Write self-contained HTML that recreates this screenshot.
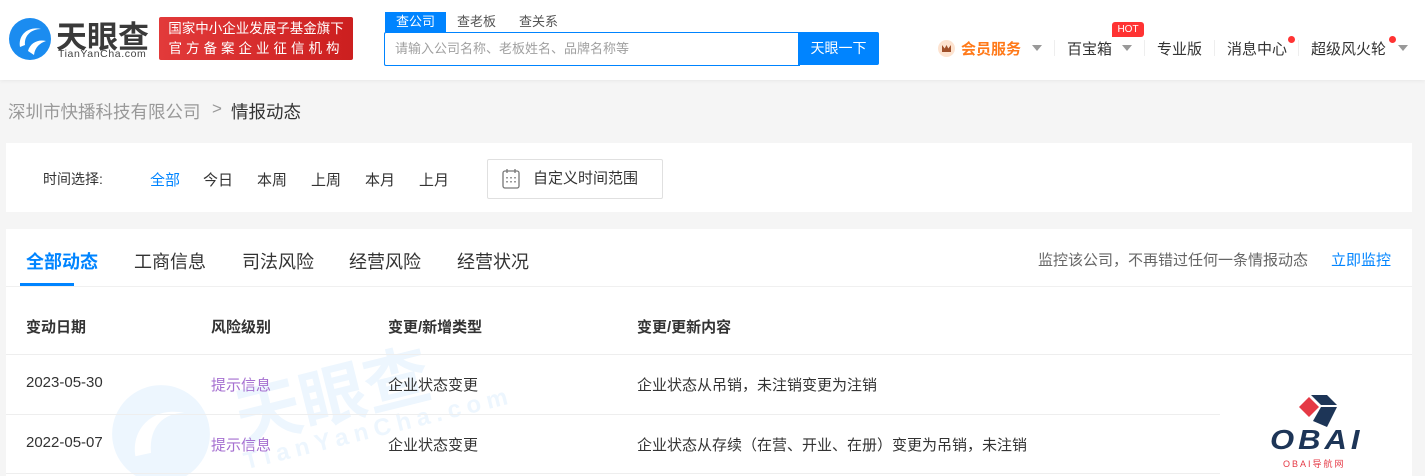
<!DOCTYPE html>
<html><head><meta charset="utf-8"><style>
*{margin:0;padding:0;box-sizing:border-box}
body{width:1425px;height:476px;overflow:hidden;background:#f5f5f5;font-family:"Liberation Sans","Noto Sans CJK SC",sans-serif;color:#333;position:relative}
.hdr{position:absolute;left:0;top:0;width:1425px;height:80px;background:#fff;box-shadow:0 1px 4px rgba(0,0,0,.06)}
.abs{position:absolute;white-space:nowrap}
.card{position:absolute;left:6px;width:1406px;background:#fff}
</style></head><body>
<div class="hdr">
  <svg class="abs" style="left:8px;top:17px" width="44" height="44" viewBox="0 0 44 44">
    <circle cx="22" cy="22" r="21" fill="#1b8cf0"/>
    <path d="M12 30 C10 18 20 9 33 12 C24 12 16 18 17 28 Z" fill="#fff"/>
    <path d="M20 34 C22 26 30 22 38 24 C32 26 27 30 26 38 Z" fill="#fff"/>
  </svg>
  <div class="abs" style="left:56px;top:12px;font-size:31px;font-weight:bold;color:#3a3a3a;letter-spacing:0px">天眼查</div>
  <div class="abs" style="left:58px;top:48px;font-size:10.5px;color:#444;letter-spacing:.6px">TianYanCha.com</div>
  <div class="abs" style="left:159px;top:17px;width:194px;height:43px;background:linear-gradient(90deg,#e23a3a,#cc1f1f);border-radius:2px;color:#fff;font-size:13.5px;text-align:center;line-height:20px;padding-top:2px">国家中小企业发展子基金旗下<br><span style="letter-spacing:4px">官方备案企业征信机构</span></div>
  <div class="abs" style="left:385px;top:12px;width:61px;height:20px;background:#0084ff;color:#fff;font-size:13px;text-align:center;line-height:20px">查公司</div>
  <div class="abs" style="left:457px;top:12px;font-size:13px;color:#555;line-height:20px">查老板</div>
  <div class="abs" style="left:519px;top:12px;font-size:13px;color:#555;line-height:20px">查关系</div>
  <div class="abs" style="left:384px;top:32px;width:416px;height:34px;border:1px solid #0084ff;border-right:none;border-radius:2px 0 0 2px"></div>
  <div class="abs" style="left:395px;top:32px;line-height:33px;font-size:13px;color:#a0a0a0">请输入公司名称、老板姓名、品牌名称等</div>
  <div class="abs" style="left:798px;top:32px;width:81px;height:33px;background:#0084ff;color:#fff;font-size:14px;text-align:center;line-height:33px;border-radius:0 2px 2px 0">天眼一下</div>
  <div class="abs" style="left:938px;top:40px;width:17px;height:17px;border-radius:50%;background:#fde3d0"></div>
  <div class="abs" style="left:942px;top:45px;width:9px;height:7px;background:#a0502a;clip-path:polygon(0 0,30% 50%,50% 0,70% 50%,100% 0,100% 100%,0 100%)"></div>
  <div class="abs" style="left:961px;top:38px;font-size:15px;font-weight:bold;color:#ff7a1a">会员服务</div>
  <div class="abs" style="left:1032px;top:45px;border:5px solid transparent;border-top:6px solid #999"></div>
  <div class="abs" style="left:1054px;top:40px;width:1px;height:16px;background:#eee"></div>
  <div class="abs" style="left:1067px;top:38px;font-size:15px;color:#333">百宝箱</div>
  <div class="abs" style="left:1122px;top:45px;border:5px solid transparent;border-top:6px solid #999"></div>
  <div class="abs" style="left:1112px;top:22px;width:32px;height:15px;background:#f33;color:#fff;font-size:10px;line-height:15px;text-align:center;border-radius:3px 3px 3px 0">HOT</div>
  <div class="abs" style="left:1144px;top:40px;width:1px;height:16px;background:#eee"></div>
  <div class="abs" style="left:1157px;top:38px;font-size:15px;color:#333">专业版</div>
  <div class="abs" style="left:1214px;top:40px;width:1px;height:16px;background:#eee"></div>
  <div class="abs" style="left:1227px;top:38px;font-size:15px;color:#333">消息中心</div>
  <div class="abs" style="left:1288px;top:36px;width:7px;height:7px;border-radius:50%;background:#f33"></div>
  <div class="abs" style="left:1298px;top:40px;width:1px;height:16px;background:#eee"></div>
  <div class="abs" style="left:1311px;top:38px;font-size:15px;color:#333">超级风火轮</div>
  <div class="abs" style="left:1389px;top:36px;width:7px;height:7px;border-radius:50%;background:#f33"></div>
  <div class="abs" style="left:1398px;top:45px;border:5px solid transparent;border-top:6px solid #999"></div>
</div>
<div class="abs" style="left:8px;top:99px;font-size:17.5px;color:#999">深圳市快播科技有限公司</div>
<div class="abs" style="left:212px;top:99px;font-size:17px;color:#999">&gt;</div>
<div class="abs" style="left:231px;top:99px;font-size:17.5px;color:#333">情报动态</div>

<div class="card" style="top:143px;height:69px">
  <div class="abs" style="left:37px;top:26px;font-size:14px;color:#333">时间选择:</div>
  <div class="abs" style="left:144px;top:26px;font-size:15px;color:#0084ff">全部</div>
  <div class="abs" style="left:197px;top:26px;font-size:15px">今日</div>
  <div class="abs" style="left:251px;top:26px;font-size:15px">本周</div>
  <div class="abs" style="left:305px;top:26px;font-size:15px">上周</div>
  <div class="abs" style="left:359px;top:26px;font-size:15px">本月</div>
  <div class="abs" style="left:413px;top:26px;font-size:15px">上月</div>
  <div class="abs" style="left:481px;top:16px;width:176px;height:40px;border:1px solid #e0e0e0;border-radius:2px"></div>
  <svg class="abs" style="left:496px;top:25px" width="18" height="21" viewBox="0 0 18 21"><rect x="1" y="3" width="16" height="17" rx="2" fill="none" stroke="#777" stroke-width="1.3"/><line x1="5" y1="1" x2="5" y2="5" stroke="#777" stroke-width="1.3"/><line x1="13" y1="1" x2="13" y2="5" stroke="#777" stroke-width="1.3"/><g fill="#999"><rect x="4" y="9" width="2" height="1.5"/><rect x="8" y="9" width="2" height="1.5"/><rect x="12" y="9" width="2" height="1.5"/><rect x="4" y="13" width="2" height="1.5"/><rect x="8" y="13" width="2" height="1.5"/><rect x="12" y="13" width="2" height="1.5"/></g></svg>
  <div class="abs" style="left:527px;top:24px;font-size:15px">自定义时间范围</div>
</div>

<div class="card" style="top:229px;height:247px;overflow:hidden">
  <div class="abs" style="left:20px;top:19px;font-size:18px;font-weight:bold;color:#0084ff">全部动态</div>
  <div class="abs" style="left:14px;top:54px;width:54px;height:3px;background:#0084ff"></div>
  <div class="abs" style="left:128px;top:19px;font-size:18px">工商信息</div>
  <div class="abs" style="left:236px;top:19px;font-size:18px">司法风险</div>
  <div class="abs" style="left:343px;top:19px;font-size:18px">经营风险</div>
  <div class="abs" style="left:451px;top:19px;font-size:18px">经营状况</div>
  <div class="abs" style="left:1032px;top:20px;font-size:15px;color:#666">监控该公司，不再错过任何一条情报动态</div>
  <div class="abs" style="left:1325px;top:20px;font-size:15px;color:#0084ff">立即监控</div>
  <div class="abs" style="left:0;top:57px;width:1406px;height:1px;background:#f0f0f0"></div>
  <svg class="abs" style="left:105px;top:155px" width="100" height="100" viewBox="0 0 90 90"><circle cx="45" cy="45" r="44" fill="#edf6fe"/><path d="M22 65 C18 40 38 20 66 26 C48 26 34 38 36 62Z" fill="#fff"/></svg>
  <div class="abs" style="left:218px;top:140px;font-size:66px;font-weight:bold;color:#edf6fe;transform:rotate(-14deg);transform-origin:left top">天眼查</div>
  <div class="abs" style="left:235px;top:220px;font-size:24px;font-weight:bold;color:#edf6fe;letter-spacing:6px;transform:rotate(-14deg);transform-origin:left top">TianYanCha.com</div>
  <div class="abs" style="left:20px;top:87px;font-size:15px;font-weight:bold">变动日期</div>
  <div class="abs" style="left:205px;top:87px;font-size:15px;font-weight:bold">风险级别</div>
  <div class="abs" style="left:382px;top:87px;font-size:15px;font-weight:bold">变更/新增类型</div>
  <div class="abs" style="left:631px;top:87px;font-size:15px;font-weight:bold">变更/更新内容</div>
  <div class="abs" style="left:0;top:125px;width:1406px;height:1px;background:#eee"></div>
  <div class="abs" style="left:20px;top:145px;font-size:15px">2023-05-30</div>
  <div class="abs" style="left:205px;top:145px;font-size:15px;color:#a56fd0">提示信息</div>
  <div class="abs" style="left:382px;top:145px;font-size:15px">企业状态变更</div>
  <div class="abs" style="left:631px;top:145px;font-size:15px">企业状态从吊销，未注销变更为注销</div>
  <div class="abs" style="left:0;top:185px;width:1406px;height:1px;background:#eee"></div>
  <div class="abs" style="left:20px;top:205px;font-size:15px">2022-05-07</div>
  <div class="abs" style="left:205px;top:205px;font-size:15px;color:#a56fd0">提示信息</div>
  <div class="abs" style="left:382px;top:205px;font-size:15px">企业状态变更</div>
  <div class="abs" style="left:631px;top:205px;font-size:15px">企业状态从存续（在营、开业、在册）变更为吊销，未注销</div>
  <div class="abs" style="left:0;top:244px;width:1406px;height:1px;background:#eee"></div>
</div>
<div class="abs" style="left:1220px;top:385px;width:192px;height:91px;background:#fff"></div>
<svg class="abs" style="left:1297px;top:393px" width="42" height="36" viewBox="0 0 42 36"><polygon points="2,12 12,2 22,12 12,22" fill="#e53945" transform="translate(0,2)"/><polygon points="14,2 30,2 40,12 24,12" fill="#1d3557"/><polygon points="24,14 40,14 30,34 16,28" fill="#1d3557"/></svg>
<div class="abs" style="left:1270px;top:424px;font-size:31px;font-weight:900;font-style:italic;color:#1d3557;letter-spacing:4px;line-height:32px;transform:scaleY(.9)">OBAI</div>
<div class="abs" style="left:1283px;top:457px;font-size:9px;color:#e53945;letter-spacing:2px">OBAI导航网</div>
</body></html>
